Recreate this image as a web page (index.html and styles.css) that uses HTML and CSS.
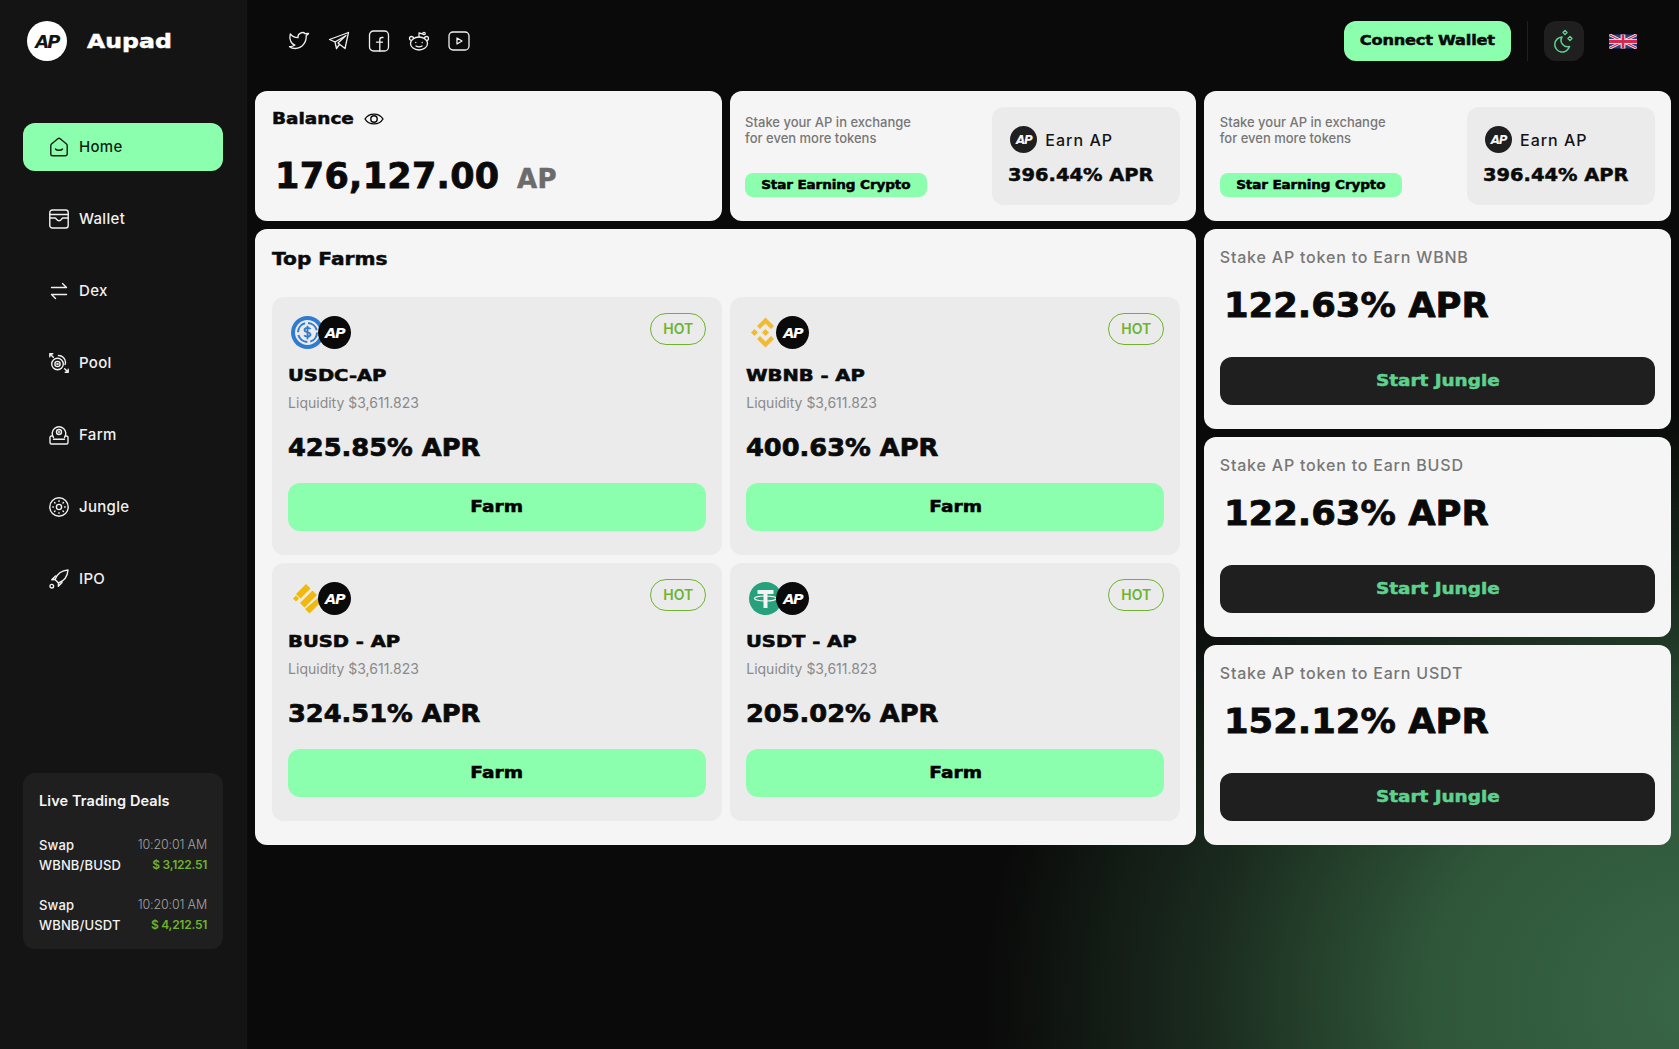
FILE: index.html
```html
<!DOCTYPE html>
<html lang="en">
<head>
<meta charset="utf-8">
<title>Aupad</title>
<link rel="stylesheet" href="styles.css">
</head>
<body>
<svg class="defs" width="0" height="0" aria-hidden="true">
  <symbol id="i-home" viewBox="0 0 20 20"><path d="M1.800 8.500c0-.6.3-1.100.7-1.500L8.800 1.800c.7-.6 1.700-.6 2.400 0L17.500 7c.4.400.7.900.7 1.500V17a1.800 1.800 0 0 1-1.800 1.800H3.600A1.800 1.800 0 0 1 1.800 17Z"/><path d="M6.500 12c1.300 1.700 5.700 1.700 7 0"/></symbol>
  <symbol id="i-wallet" viewBox="0 0 20 20"><rect x=".8" y="1" width="18.400" height="18" rx="2.500"/><path d="M.8 5.500h18.400"/><path d="M.8 9h5.400c1 0 1.500 2.800 3.800 2.800s2.800-2.800 3.800-2.800h5.400"/></symbol>
  <symbol id="i-dex" viewBox="0 0 20 20"><path d="M2.500 6.500h15M13.500 2.500l4 4M2.500 13.500h15M6.500 17.500l-4-4"/></symbol>
  <symbol id="i-pool" viewBox="0 0 20 20"><circle cx="8.500" cy="11" r="5.800"/><circle cx="8.500" cy="11" r="2.600"/><circle cx="8.500" cy="11" r=".5"/><path d="M9.500 2.500c3.800.1 7 3 7 6.800 0 .8-.1 1.500-.4 2.200M.8.800l3.500 3.500M.8 3.800v-3h3M19.200 19.200l-3.500-3.500M19.200 16.200v3h-3"/></symbol>
  <symbol id="i-farm" viewBox="0 0 20 20"><path d="M4.500 12.500a6.800 6.800 0 1 1 11 0"/><path d="M3.500 11H2.300A1.300 1.300 0 0 0 1 12.300v5.200A1.500 1.500 0 0 0 2.500 19h15a1.500 1.500 0 0 0 1.500-1.500v-5.200a1.300 1.300 0 0 0-1.300-1.300h-1.200M4.500 14.200h11"/><circle cx="10" cy="7" r="2.500"/><circle cx="10" cy="7" r=".4"/></symbol>
  <symbol id="i-jungle" viewBox="0 0 20 20"><circle cx="10" cy="10" r="9.200"/><circle cx="10" cy="10" r="2.600"/><path d="M10 3.800v.6M10 15.600v.6M3.800 10h.6M15.600 10h.6M5.600 5.600l.4.4M14 14l.4.4M14.400 5.600l-.4.4M6 14l-.4.4"/></symbol>
  <symbol id="i-ipo" viewBox="0 0 20 20"><path d="M6 10.500C8 5 12.500 1.500 19 1c-.5 6.500-4 11-9.500 13Z"/><path d="M6.500 7 2.800 10.800 6 10.500M13 13.500 9.300 17.300 9.500 14"/><circle cx="2.800" cy="17.200" r="1.800"/></symbol>
</svg>
<div class="app">
  <aside class="sidebar">
    <div class="brand">
      <span class="ap ap-light ap-40">AP</span>
      <span class="brand-name">Aupad</span>
    </div>
    <nav class="nav">
      <a class="nav-item active"><svg class="ico"><use href="#i-home"/></svg>Home</a>
      <a class="nav-item"><svg class="ico"><use href="#i-wallet"/></svg>Wallet</a>
      <a class="nav-item"><svg class="ico"><use href="#i-dex"/></svg>Dex</a>
      <a class="nav-item"><svg class="ico"><use href="#i-pool"/></svg>Pool</a>
      <a class="nav-item"><svg class="ico"><use href="#i-farm"/></svg>Farm</a>
      <a class="nav-item"><svg class="ico"><use href="#i-jungle"/></svg>Jungle</a>
      <a class="nav-item"><svg class="ico"><use href="#i-ipo"/></svg>IPO</a>
    </nav>
    <section class="deals">
      <h3 class="deals-title">Live Trading Deals</h3>
      <div class="deal">
        <div class="deal-row"><span>Swap</span><span class="deal-time">10:20:01 AM</span></div>
        <div class="deal-row"><span>WBNB/BUSD</span><span class="deal-amt">$ 3,122.51</span></div>
      </div>
      <div class="deal">
        <div class="deal-row"><span>Swap</span><span class="deal-time">10:20:01 AM</span></div>
        <div class="deal-row"><span>WBNB/USDT</span><span class="deal-amt">$ 4,212.51</span></div>
      </div>
    </section>
  </aside>
  <main class="main">
    <header class="topbar">
      <div class="socials">
        <svg class="social" viewBox="0 0 22 22"><path d="M20.500 3.500c-.7.9-1.500 1.500-2.300 2 .4 6.500-3.900 13-11 13-2.300 0-4.300-.7-5.700-1.800 2.200.2 3.900-.4 5.500-1.600C3.500 14.500.8 9.500 2.300 3.800 4 6 6.500 7.400 10 7.600 9.500 3.500 14.700 1 17.200 3.800c1-.2 2.200-.5 3.300-.3Z"/></svg>
        <svg class="social" viewBox="0 0 22 22"><path d="M20.500 2.500 1.500 9.500l5.500 2.500 11-6.500-8 7.500 7 5.500ZM7 12l1.500 6.500 2.500-3.500"/></svg>
        <svg class="social" viewBox="0 0 22 22"><rect x="1.500" y="1" width="19" height="20" rx="4"/><path d="M15 7.500h-1.200c-1.300 0-2 .8-2 2.200V21M8.500 12.200h6"/></svg>
        <svg class="social" viewBox="0 0 22 22"><ellipse cx="11" cy="13.500" rx="8.500" ry="6.500"/><path d="M8 16c1.800 1.100 4.200 1.100 6 0M11 7V3l3.500.8M3.500 10.500A2 2 0 1 1 5.500 8.500M18.500 10.500a2 2 0 1 0-2-2M7.800 12.300v.2M14.200 12.300v.2"/><circle cx="16" cy="3.500" r="1.200"/></svg>
        <svg class="social" viewBox="0 0 22 22"><rect x="1" y="2" width="20" height="18" rx="4"/><path d="m9 8 5 3-5 3Z"/></svg>
      </div>
      <div class="top-actions">
        <button class="connect"><span>Connect Wallet</span></button>
        <span class="divider"></span>
        <button class="theme">
          <svg class="moon" viewBox="0 0 40 40"><path d="M18 16a7.500 7.500 0 1 0 7.500 9.500 6.500 6.500 0 0 1-7.500-9.500Z"/><path d="m21 9.500 2 2-2 2-2-2ZM26 15.500l2 2-2 2-2-2Z"/></svg>
        </button>
        <svg class="flag" viewBox="0 0 60 30">
          <rect width="60" height="30" fill="#2b3f87"/>
          <path d="M0 0l60 30M60 0 0 30" stroke="#fff" stroke-width="6"/>
          <path d="M0 0l60 30M60 0 0 30" stroke="#d6294a" stroke-width="2.500"/>
          <path d="M30 0v30M0 15h60" stroke="#fff" stroke-width="10"/>
          <path d="M30 0v30M0 15h60" stroke="#d6294a" stroke-width="6"/>
        </svg>
      </div>
    </header>
    <div class="grid">
      <section class="card balance">
        <h2 class="balance-title"><span>Balance</span>
          <svg class="eye" viewBox="0 0 20 20"><path d="M1 10c4-6.500 14-6.500 18 0-4 6.500-14 6.500-18 0Z"/><circle cx="10" cy="10" r="3.200"/></svg>
        </h2>
        <p class="balance-value">176,127.00 <span class="balance-unit">AP</span></p>
      </section>

      <section class="card earn">
        <div class="earn-left">
          <p class="earn-text">Stake your AP in exchange<br>for even more tokens</p>
          <button class="earn-btn"><span>Star Earning Crypto</span></button>
        </div>
        <div class="earn-box">
          <div class="earn-head"><span class="ap ap-dark ap-27">AP</span>Earn AP</div>
          <div class="earn-apr">396.44% APR</div>
        </div>
      </section>

      <section class="card earn">
        <div class="earn-left">
          <p class="earn-text">Stake your AP in exchange<br>for even more tokens</p>
          <button class="earn-btn"><span>Star Earning Crypto</span></button>
        </div>
        <div class="earn-box">
          <div class="earn-head"><span class="ap ap-dark ap-27">AP</span>Earn AP</div>
          <div class="earn-apr">396.44% APR</div>
        </div>
      </section>

      <section class="card farms">
        <h2 class="farms-title">Top Farms</h2>
        <div class="farm-grid">
          <article class="farm">
            <div class="farm-top">
              <div class="pair">
                <svg class="token" viewBox="0 0 33 33"><circle cx="16.500" cy="16.500" r="16.500" fill="#2f7bd0"/><circle cx="16.500" cy="16.500" r="12.500" fill="#ebebeb"/><circle cx="16.500" cy="16.500" r="9.500" fill="none" stroke="#2f7bd0" stroke-width="2" stroke-dasharray="12 3"/><path d="M19.500 13c-1-1.600-6-1.600-6 1 0 3 6 1.500 6 4.500 0 2.600-5 2.600-6.300.8M16.500 9.800v13.400" fill="none" stroke="#2f7bd0" stroke-width="1.800"/></svg>
                <span class="ap ap-black ap-33 overlap">AP</span>
              </div>
              <span class="hot">HOT</span>
            </div>
            <h3 class="farm-name">USDC-AP</h3>
            <p class="farm-liq">Liquidity $3,611.823</p>
            <p class="farm-apr">425.85% APR</p>
            <button class="farm-btn"><span>Farm</span></button>
          </article>
          <article class="farm">
            <div class="farm-top">
              <div class="pair">
                <svg class="token" viewBox="0 0 33 33"><g fill="#f3ba2f"><path d="M16.500 1.500 25 10l-3 3-5.500-5.500L11 13l-3-3Z"/><path d="M16.500 31.500 25 23l-3-3-5.500 5.500L11 20l-3 3Z"/><path d="m16.500 13 3.500 3.500-3.500 3.500-3.500-3.500ZM5.500 13l3.500 3.500L5.500 20 2 16.500Z"/></g></svg>
                <span class="ap ap-black ap-33 overlap">AP</span>
              </div>
              <span class="hot">HOT</span>
            </div>
            <h3 class="farm-name">WBNB - AP</h3>
            <p class="farm-liq">Liquidity $3,611.823</p>
            <p class="farm-apr">400.63% APR</p>
            <button class="farm-btn"><span>Farm</span></button>
          </article>
          <article class="farm">
            <div class="farm-top">
              <div class="pair">
                <svg class="token" viewBox="0 0 33 33"><g fill="#f0b90b"><path d="m15 2 4.500 4.500-10 10L5 12ZM21.500 8.500 26 13 13.500 25.500 9 21ZM28 15l3.500 3.500-13 13L14 27Z"/><path d="m5 13.500 3 3-3 3-3-3Z"/></g></svg>
                <span class="ap ap-black ap-33 overlap">AP</span>
              </div>
              <span class="hot">HOT</span>
            </div>
            <h3 class="farm-name">BUSD - AP</h3>
            <p class="farm-liq">Liquidity $3,611.823</p>
            <p class="farm-apr">324.51% APR</p>
            <button class="farm-btn"><span>Farm</span></button>
          </article>
          <article class="farm">
            <div class="farm-top">
              <div class="pair">
                <svg class="token" viewBox="0 0 33 33"><circle cx="16.500" cy="16.500" r="16.500" fill="#26a17b"/><path d="M8.500 8h16v4h-6v14h-4V12h-6Z" fill="#f4f4f4"/><ellipse cx="16.500" cy="16.500" rx="11" ry="2.500" fill="none" stroke="#f4f4f4" stroke-width="1.200"/></svg>
                <span class="ap ap-black ap-33 overlap">AP</span>
              </div>
              <span class="hot">HOT</span>
            </div>
            <h3 class="farm-name">USDT - AP</h3>
            <p class="farm-liq">Liquidity $3,611.823</p>
            <p class="farm-apr">205.02% APR</p>
            <button class="farm-btn"><span>Farm</span></button>
          </article>
        </div>
      </section>

      <div class="stakes">
        <section class="card stake">
          <p class="stake-title">Stake AP token to Earn WBNB</p>
          <p class="stake-apr">122.63% APR</p>
          <button class="stake-btn"><span>Start Jungle</span></button>
        </section>
        <section class="card stake">
          <p class="stake-title">Stake AP token to Earn BUSD</p>
          <p class="stake-apr">122.63% APR</p>
          <button class="stake-btn"><span>Start Jungle</span></button>
        </section>
        <section class="card stake">
          <p class="stake-title">Stake AP token to Earn USDT</p>
          <p class="stake-apr">152.12% APR</p>
          <button class="stake-btn"><span>Start Jungle</span></button>
        </section>
      </div>
    </div>
  </main>
</div>
</body>
</html>
```

FILE: styles.css
```css
* { box-sizing: border-box; }
html, body { margin: 0; height: 100%; }
body {
  font-family: Inter, "Open Sans", sans-serif;
  background: #0a0a0a;
  color: #0a0a0a;
  overflow: hidden;
}
p, h2, h3 { margin: 0; }
button { border: 0; padding: 0 0 2px; font: inherit; }
button span { display: inline-block; }
.defs { position: absolute; }

.app {
  display: flex;
  height: 1049px;
  background:
    radial-gradient(ellipse 800px 640px at 1720px 1000px, #3a6849 0%, #2f5639 37%, #1a2a1e 65%, #0a0a0a 92%);
}

.sidebar {
  width: 247px;
  flex: none;
  background: #141414;
  padding: 21px 24px 100px 23px;
  display: flex;
  flex-direction: column;
  color: #f2f2f2;
}
.brand { display: flex; align-items: center; padding-left: 4px; gap: 20px; height: 40px; }

/* The display face is a wide, heavy one: DejaVu Bold widened to suit. */
.brand-name, .balance-title, .balance-value, .earn-btn, .earn-apr, .farms-title,
.farm-name, .farm-apr, .farm-btn, .stake-apr, .stake-btn, .connect {
  font-family: "DejaVu Sans", sans-serif;
  font-weight: 700;
  -webkit-text-stroke-width: .5px;
}
.brand-name { display: inline-block; font-size: 20px; color: #fff; transform: scaleX(1.18); transform-origin: left center; }

.ap {
  display: inline-flex;
  align-items: center;
  justify-content: center;
  border-radius: 50%;
  flex: none;
  font-family: "DejaVu Sans", sans-serif;
  font-weight: 700;
  font-style: italic;
  letter-spacing: -.1em;
}
.ap-light { background: #fff; color: #141414; }
.ap-dark { background: #1f1f1f; color: #f5f5f5; }
.ap-black { background: #0a0a0a; color: #fff; }
.ap-40 { width: 40px; height: 40px; font-size: 18px; }
.ap-27 { width: 27px; height: 27px; font-size: 12px; }
.ap-33 { width: 33px; height: 33px; font-size: 14.500px; }

.nav { display: flex; flex-direction: column; gap: 24px; margin-top: 62px; }
.nav-item {
  display: flex;
  align-items: center;
  height: 48px;
  padding: 0 0 1px 26px;
  gap: 10px;
  border-radius: 12px;
  font-size: 15px;
  font-weight: 500;
  letter-spacing: .3px;
  color: #f0f0f0;
}
.nav-item.active { background: #8cffae; color: #0f1f14; }
.ico { width: 20px; height: 20px; fill: none; stroke: currentColor; stroke-width: 1.400; stroke-linecap: round; stroke-linejoin: round; }

.deals {
  margin-top: auto;
  height: 176px;
  padding: 17px 16px;
  border-radius: 12px;
  background: #1f1f1f;
}
.deals-title { font-size: 14.500px; font-weight: 600; letter-spacing: .1px; line-height: 22px; margin: 0 0 23px; color: #f4f4f4; }
.deal { margin-bottom: 20px; }
.deal-row { display: flex; justify-content: space-between; font-size: 13px; font-weight: 500; line-height: 20px; letter-spacing: .15px; }
.deal-time { font-size: 12.500px; font-weight: 300; color: #a5a5a5; letter-spacing: -.15px; }
.deal-amt { font-size: 12px; color: #6fb32f; font-weight: 600; letter-spacing: -.25px; }

.main { flex: 1; min-width: 0; display: flex; flex-direction: column; padding: 0 8px 0 8.100px; }
.topbar { height: 91px; flex: none; display: flex; align-items: center; justify-content: space-between; padding: 0 34.500px 9px 32.300px; }
.socials { display: flex; gap: 18px; margin-left: 1px; }
.social { width: 22px; height: 22px; fill: none; stroke: #f0f0f0; stroke-width: 1.300; stroke-linecap: round; stroke-linejoin: round; }
.top-actions { display: flex; align-items: center; }
.connect { width: 167px; height: 40px; border-radius: 12px; background: #8cffae; color: #0a0a0a; font-size: 14px; letter-spacing: -.2px; }
.connect span { transform: scaleX(1.157); }
.divider { width: 1px; height: 40px; background: #1f1f1f; margin: 0 16px; }
.theme { width: 40px; height: 40px; padding: 0; border-radius: 12px; background: #1f1f1f; display: flex; }
.moon { width: 40px; height: 40px; fill: none; stroke: #5ed18e; stroke-width: 1.500; stroke-linejoin: round; }
.flag { width: 28px; height: 15px; margin-left: 25px; }

.grid { display: grid; grid-template-columns: repeat(3, 1fr); grid-template-rows: 130px 616px; gap: 8px; }
.card { background: #f5f5f5; border-radius: 12px; }

.balance { padding: 16px 16px 16px 17px; }
.balance-title { display: flex; align-items: center; font-size: 15.500px; line-height: 24px; }
.balance-title span { display: inline-block; transform: scaleX(1.19); transform-origin: left center; }
.eye { width: 20px; height: 20px; margin-left: 23px; fill: none; stroke: #0a0a0a; stroke-width: 1.400; }
.balance-value { font-size: 35px; line-height: 44px; margin: 23px 0 0 3px; white-space: nowrap; letter-spacing: .3px; -webkit-text-stroke-width: .8px; }
.balance-unit { font-size: 26px; margin-left: 5px; color: #6b6b6b; -webkit-text-stroke-width: .5px; }

.earn { display: flex; justify-content: space-between; padding: 16px 16px 16px 15.400px; }
.earn-left { display: flex; flex-direction: column; justify-content: space-between; padding-bottom: 8px; }
.earn-text { font-size: 13px; line-height: 16px; color: #777; font-weight: 500; padding-top: 7px; }
.earn-btn { width: 182px; height: 24px; border-radius: 8px; background: #8cffae; font-size: 12.500px; letter-spacing: -.1px; }
.earn-btn span { transform: scaleX(1.085); }
.earn-box { width: 188px; height: 98px; background: #ebebeb; border-radius: 12px; padding: 19px 16px 0; }
.earn-head { display: flex; align-items: center; gap: 8px; font-size: 16px; font-weight: 500; letter-spacing: 1px; padding-left: 2px; height: 27px; color: #141414; }
.earn-apr { font-size: 18px; line-height: 24px; margin-top: 10px; white-space: nowrap; transform: scaleX(1.08); transform-origin: left center; }

.farms { grid-column: span 2; padding: 16px 16px 16px 17px; }
.farms-title { font-size: 18px; line-height: 28px; transform: scaleX(1.12); transform-origin: left center; }
.farm-grid { display: grid; grid-template-columns: 1fr 1fr; grid-template-rows: 258px 258px; gap: 8px; margin-top: 24px; }
.farm { background: #ebebeb; border-radius: 12px; padding: 16px; display: flex; flex-direction: column; }
.farm-top { display: flex; justify-content: space-between; height: 32px; }
.pair { display: flex; padding: 3px 0 0 3px; }
.token { width: 33px; height: 33px; }
.overlap { margin-left: -6px; position: relative; }
.hot { width: 56px; height: 32px; padding-bottom: 1px; border: 1px solid #6fb32f; border-radius: 16px; color: #6fb32f; font-size: 14px; font-weight: 600; display: flex; align-items: center; justify-content: center; }
.farm-name { font-size: 16px; line-height: 24px; margin-top: 19px; transform: scaleX(1.22); transform-origin: left center; -webkit-text-stroke-width: .6px; }
.farm-liq { font-size: 14px; line-height: 20px; margin-top: 5px; color: #8a8a8a; }
.farm-apr { font-size: 24px; line-height: 32px; margin-top: 19px; transform: scaleX(1.07); transform-origin: left center; -webkit-text-stroke-width: .7px; }
.farm-btn { height: 48px; margin-top: 19px; border-radius: 12px; background: #8cffae; font-size: 16px; }
.farm-btn span { transform: scaleX(1.16); }

.stakes { display: flex; flex-direction: column; gap: 8px; }
.stake { height: 200px; padding: 16px; display: flex; flex-direction: column; }
.stake-title { font-size: 16px; line-height: 24px; font-weight: 500; color: #777; letter-spacing: .8px; margin-left: -.6px; }
.stake-apr { font-size: 34px; line-height: 44px; margin: 14px 0 0 4px; white-space: nowrap; transform: scaleX(1.04); transform-origin: left center; -webkit-text-stroke-width: .8px; }
.stake-btn { height: 48px; margin-top: auto; margin-bottom: 8px; border-radius: 12px; background: #1f1f1f; color: #5ed18e; font-size: 16px; }
.stake-btn span { transform: scaleX(1.15); }
```
